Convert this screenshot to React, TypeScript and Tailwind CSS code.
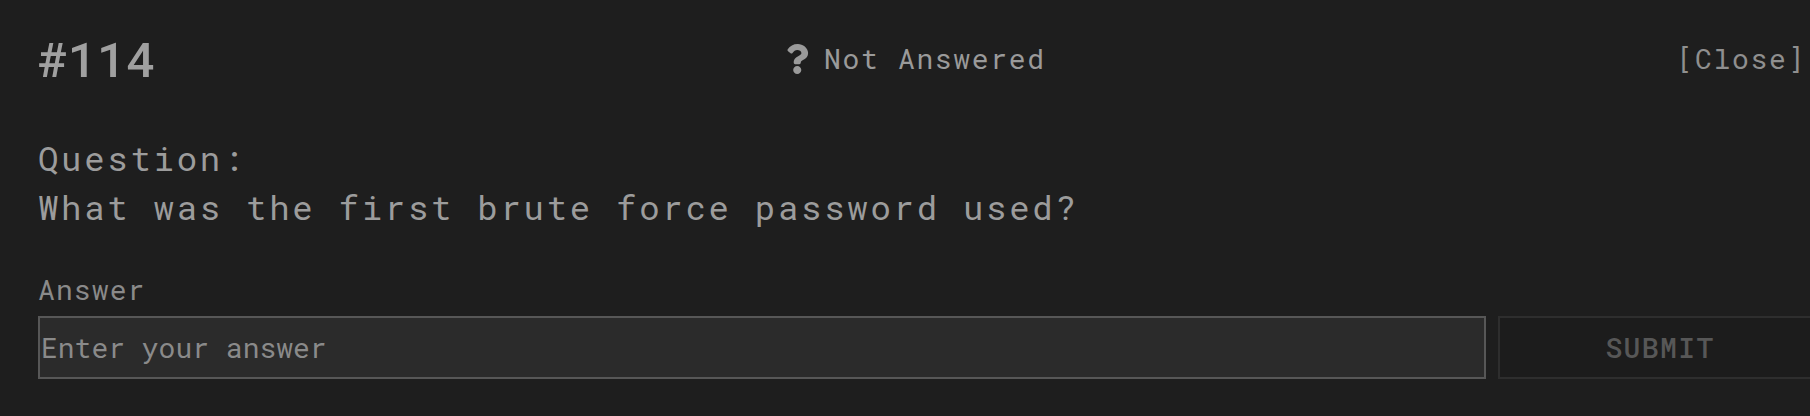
import { FaQuestion } from 'react-icons/fa';

const mono = "font-['Roboto_Mono','DejaVu_Sans_Mono','Liberation_Mono',monospace]";

export default function App() {
  return (
    <div className={`w-full h-[416px] overflow-hidden bg-[#1e1e1e] ${mono}`}>
      <div className="w-[1860px] pl-[38px] pt-[34px]">
        {/* Header */}
        <div className="w-[1768px] h-[49px] flex items-center justify-between">
          <span className="text-[49px] leading-[49px] font-medium text-[#a0a0a0]">#114</span>
          <div className="flex items-center gap-[15px]">
            <FaQuestion className="w-[22.5px] h-[30px] text-[#9a9a9a]" />
            <span className="text-[28px] leading-[32px] tracking-[0.06em] text-[#9a9a9a]">Not Answered</span>
          </div>
          <button className="text-[28px] leading-[32px] tracking-[0.06em] text-[#8f8f8f]">[Close]</button>
        </div>

        {/* Question */}
        <div className="mt-[50px] text-[34px] leading-[49px] tracking-[0.08em] text-[#9c9c9c]">
          <p>Question:</p>
          <p>What was the first brute force password used?</p>
        </div>

        {/* Answer */}
        <label className="block mt-[43px] text-[28px] leading-[32px] tracking-[0.04em] text-[#8a8a8a]">Answer</label>
        <div className="mt-[10px] flex gap-[12px]">
          <input
            type="text"
            placeholder="Enter your answer"
            className={`w-[1448px] h-[63px] px-[1px] bg-[#2b2b2b] border-2 border-[#575757] outline-none text-[28px] text-[#aaaaaa] placeholder:text-[#8a8a8a] ${mono}`}
          />
          <button className="w-[324px] h-[63px] bg-[#1c1c1c] border-2 border-[#2e2e2e] text-[28px] tracking-[0.05em] font-medium text-[#575757]">
            SUBMIT
          </button>
        </div>
      </div>
    </div>
  );
}
